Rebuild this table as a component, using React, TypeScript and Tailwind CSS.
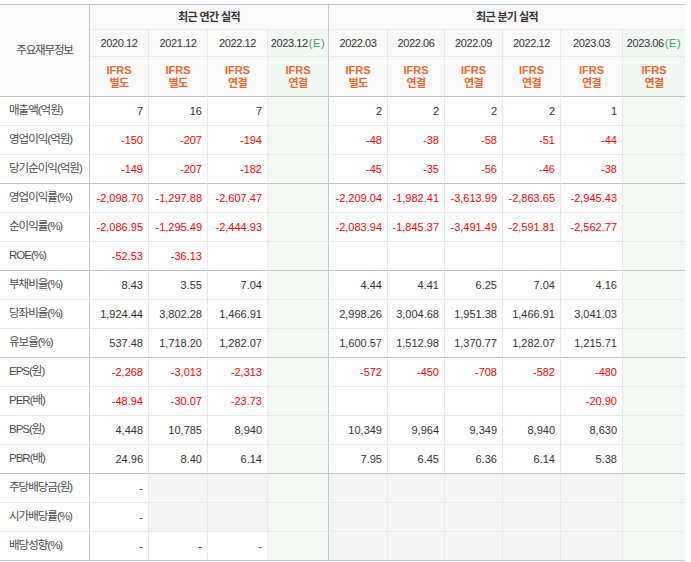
import React from "react";

type Row = { label: string; annual: string[]; quarter: string[]; gray?: boolean[]; end?: boolean };

const rows: Row[] = [
  { label: "매출액(억원)", annual: ["7", "16", "7"], quarter: ["2", "2", "2", "2", "1"] },
  { label: "영업이익(억원)", annual: ["-150", "-207", "-194"], quarter: ["-48", "-38", "-58", "-51", "-44"] },
  { label: "당기순이익(억원)", annual: ["-149", "-207", "-182"], quarter: ["-45", "-35", "-56", "-46", "-38"], end: true },
  { label: "영업이익률(%)", annual: ["-2,098.70", "-1,297.88", "-2,607.47"], quarter: ["-2,209.04", "-1,982.41", "-3,613.99", "-2,863.65", "-2,945.43"] },
  { label: "순이익률(%)", annual: ["-2,086.95", "-1,295.49", "-2,444.93"], quarter: ["-2,083.94", "-1,845.37", "-3,491.49", "-2,591.81", "-2,562.77"] },
  { label: "ROE(%)", annual: ["-52.53", "-36.13", ""], quarter: ["", "", "", "", ""], end: true },
  { label: "부채비율(%)", annual: ["8.43", "3.55", "7.04"], quarter: ["4.44", "4.41", "6.25", "7.04", "4.16"] },
  { label: "당좌비율(%)", annual: ["1,924.44", "3,802.28", "1,466.91"], quarter: ["2,998.26", "3,004.68", "1,951.38", "1,466.91", "3,041.03"] },
  { label: "유보율(%)", annual: ["537.48", "1,718.20", "1,282.07"], quarter: ["1,600.57", "1,512.98", "1,370.77", "1,282.07", "1,215.71"], end: true },
  { label: "EPS(원)", annual: ["-2,268", "-3,013", "-2,313"], quarter: ["-572", "-450", "-708", "-582", "-480"] },
  { label: "PER(배)", annual: ["-48.94", "-30.07", "-23.73"], quarter: ["", "", "", "", "-20.90"] },
  { label: "BPS(원)", annual: ["4,448", "10,785", "8,940"], quarter: ["10,349", "9,964", "9,349", "8,940", "8,630"] },
  { label: "PBR(배)", annual: ["24.96", "8.40", "6.14"], quarter: ["7.95", "6.45", "6.36", "6.14", "5.38"], end: true },
  { label: "주당배당금(원)", annual: ["-", "", ""], quarter: ["", "", "", "", ""], gray: [false, true, true, false, true, true, true, true, true, false] },
  { label: "시가배당률(%)", annual: ["-", "", ""], quarter: ["", "", "", "", ""], gray: [false, true, true, false, true, true, true, true, true, false] },
  { label: "배당성향(%)", annual: ["-", "-", "-"], quarter: ["", "", "", "", ""], gray: [false, false, false, false, true, true, true, true, true, false], end: true },
];

const years: { y: string; e?: boolean; t: string }[] = [
  { y: "2020.12", t: "별도" },
  { y: "2021.12", t: "별도" },
  { y: "2022.12", t: "연결" },
  { y: "2023.12", e: true, t: "연결" },
  { y: "2022.03", t: "별도" },
  { y: "2022.06", t: "연결" },
  { y: "2022.09", t: "연결" },
  { y: "2022.12", t: "연결" },
  { y: "2023.03", t: "연결" },
  { y: "2023.06", e: true, t: "연결" },
];

function rBorder(i: number) {
  if (i === 3) return "border-r border-r-[#c6c6c6]";
  if (i === 9) return "";
  return "border-r border-r-[#e9e9e9]";
}

export default function App() {
  const cells: React.ReactNode[] = [];
  cells.push(
    <div
      key="lh"
      className="row-span-3 flex items-center justify-center border-r border-b border-r-[#c6c6c6] border-b-[#c6c6c6] bg-[#f9f9f9] text-[11.5px] tracking-[-1.2px] text-[#4a4a4a]"
    >
      주요재무정보
    </div>
  );
  cells.push(
    <div
      key="ah"
      className="col-span-4 flex items-center justify-center border-r border-b border-r-[#c6c6c6] border-b-[#e9e9e9] bg-[#f9f9f9] text-[11px] font-bold tracking-[-0.6px] text-[#333]"
    >
      최근 연간 실적
    </div>
  );
  cells.push(
    <div
      key="qh"
      className="col-span-6 flex items-center justify-center border-b border-b-[#e9e9e9] bg-[#f9f9f9] text-[11px] font-bold tracking-[-0.6px] text-[#333]"
    >
      최근 분기 실적
    </div>
  );
  years.forEach((y, i) => {
    cells.push(
      <div
        key={"y" + i}
        className={
          "flex items-center justify-center border-b border-b-[#e9e9e9] text-[11px] tracking-[-0.4px] text-[#333] " +
          rBorder(i) +
          (y.e ? " bg-[#f1f7f2]" : " bg-[#f9f9f9]")
        }
      >
        {y.y}
        {y.e ? <span className="ml-[1px] tracking-[0.6px] text-[#3d9b5c]">(E)</span> : null}
      </div>
    );
  });
  years.forEach((y, i) => {
    cells.push(
      <div
        key={"t" + i}
        className={
          "flex flex-col items-center justify-center border-b border-b-[#c6c6c6] text-[11px] font-bold leading-[13px] text-[#ec6a2e] " +
          rBorder(i) +
          (y.e ? " bg-[#f1f7f2]" : " bg-[#f9f9f9]")
        }
      >
        <span>IFRS</span>
        <span className="tracking-[-0.5px]">{y.t}</span>
      </div>
    );
  });

  rows.forEach((r, ri) => {
    const bb = r.end ? "border-b border-b-[#c6c6c6]" : "border-b border-b-[#e9e9e9]";
    cells.push(
      <div
        key={"l" + ri}
        className={"flex items-center justify-start pl-[9px] border-r border-r-[#c6c6c6] bg-white text-[11.5px] tracking-[-1px] text-[#4a4a4a] " + bb}
      >
        {r.label}
      </div>
    );
    const vals = [...r.annual, "", ...r.quarter, ""];
    vals.forEach((v, ci) => {
      const est = ci === 3 || ci === 9;
      const gray = r.gray ? r.gray[ci] : false;
      const red = v.startsWith("-") && v.length > 1;
      const bg = est ? "bg-[#f3f8f4]" : gray ? "bg-[#f5f5f5]" : "bg-white";
      cells.push(
        <div
          key={"c" + ri + "_" + ci}
          className={
            "flex items-center justify-end pr-[5px] text-[11px] " +
            bb +
            " " +
            rBorder(ci) +
            " " +
            bg +
            (red ? " text-[#ff0000]" : " text-[#333]")
          }
        >
          {v}
        </div>
      );
    });
  });

  return (
    <div className="w-[691px] h-[562px] bg-white font-['Liberation_Sans','Noto_Sans_CJK_KR',sans-serif]">
      <div className="pt-[4px]">
        <div className="w-[685px] border-t border-t-[#c4c4c4] grid grid-cols-[90px_59px_59px_60px_61px_59px_57px_58px_58px_62px_62px] grid-rows-[25px_27px_40px_repeat(16,29px)]">
          {cells}
        </div>
      </div>
    </div>
  );
}
